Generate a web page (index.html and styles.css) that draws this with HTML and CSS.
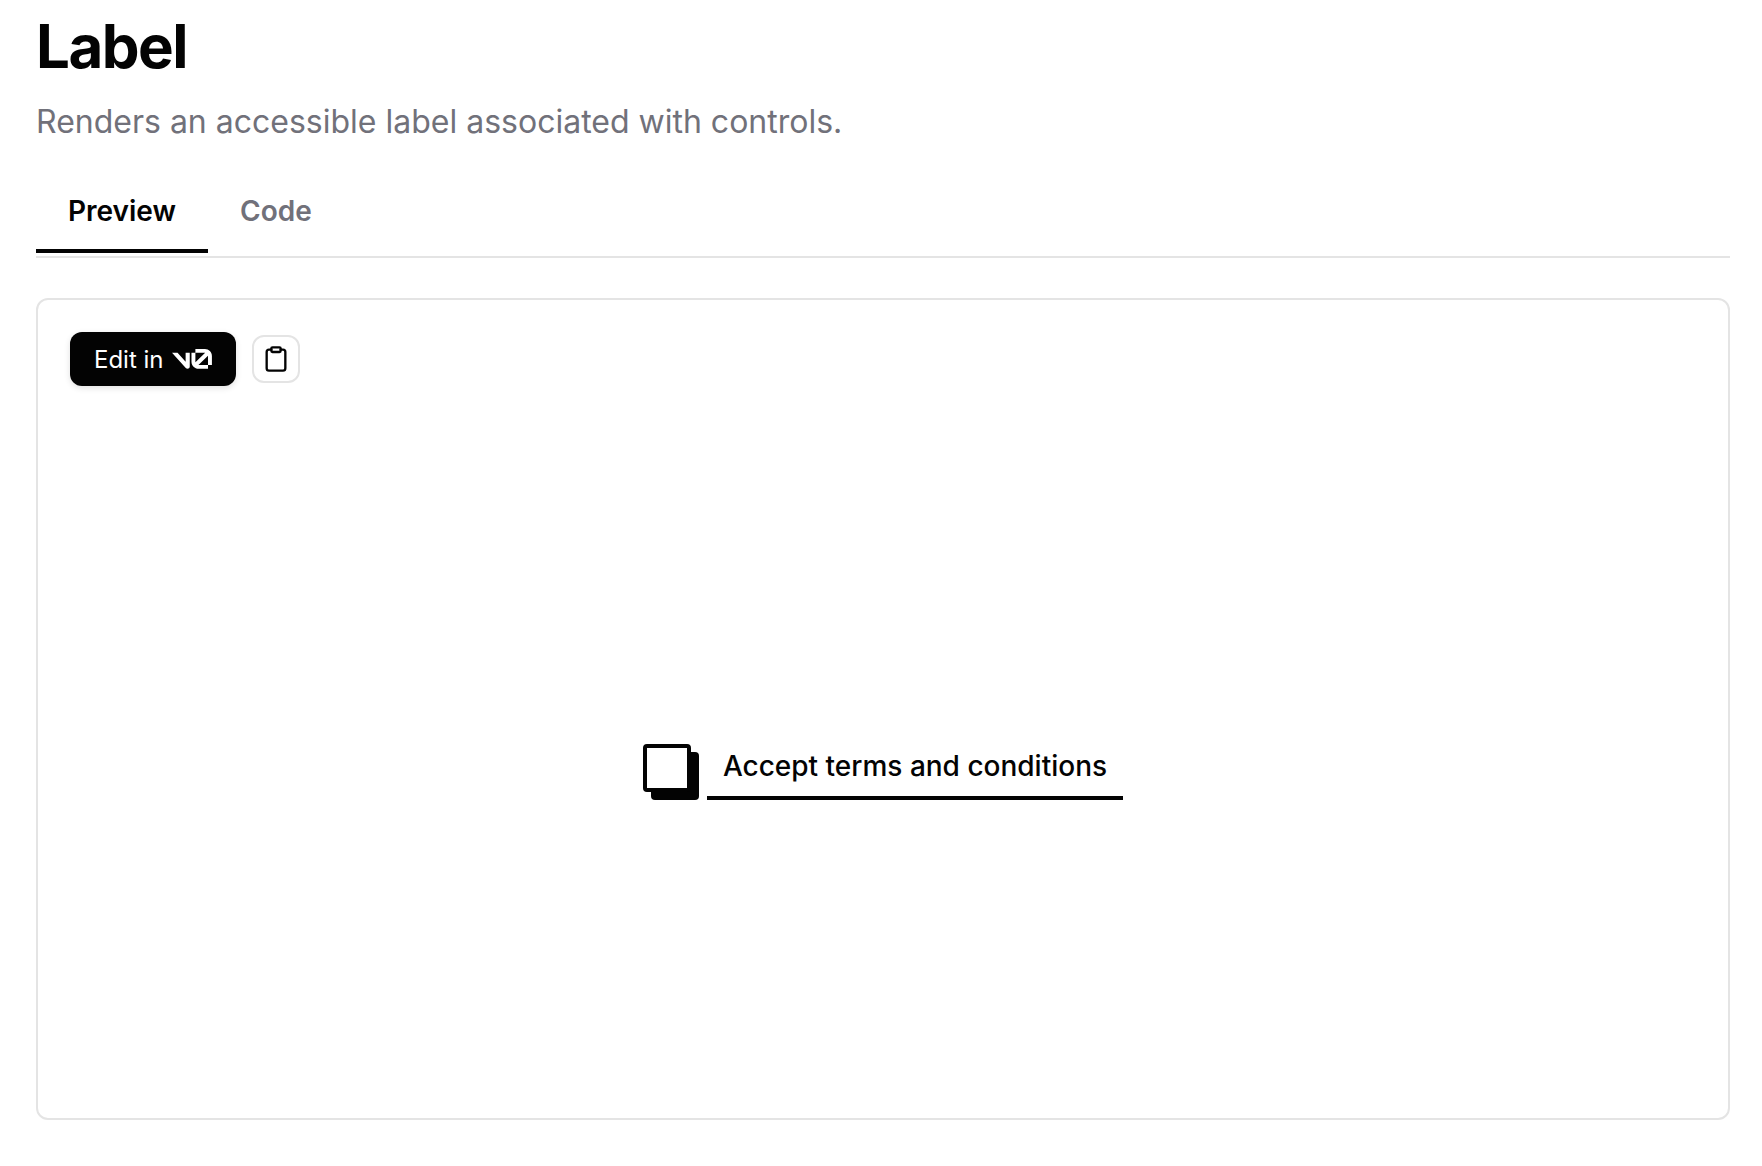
FILE: index.html
```html
<!DOCTYPE html>
<html lang="en">
<head>
  <meta charset="UTF-8" />
  <meta name="viewport" content="width=device-width,initial-scale=1" />
  <title>Label</title>
  <link rel="stylesheet" href="styles.css">
</head>
<body>
  <main class="page">
    <h1>Label</h1>
    <p class="lead">Renders an accessible label associated with controls.</p>

    <div class="tabs" role="tablist">
      <button class="tab active" type="button" role="tab" aria-selected="true">Preview</button>
      <button class="tab" type="button" role="tab" aria-selected="false">Code</button>
    </div>

    <section class="panel">
      <div class="toolbar">
        <button class="btn-v0" type="button">
          Edit in
          <svg class="v0-logo" viewBox="0 0 40 20" fill="currentColor" aria-label="v0">
            <path d="M23.3919 0H32.9188C36.7819 0 39.9136 3.13165 39.9136 6.99475V16.0805H36.0006V6.99475C36.0006 6.90167 35.9969 6.80925 35.9898 6.71766L26.4628 16.079C26.4949 16.08 26.5272 16.0805 26.5595 16.0805H36.0006V19.7762H26.5595C22.6964 19.7762 19.4788 16.6139 19.4788 12.7508V3.68923H23.3919V12.7508C23.3919 12.9253 23.4054 13.0977 23.4316 13.2668L33.1682 3.6995C33.0861 3.6927 33.003 3.68923 32.9188 3.68923H23.3919V0Z"/>
            <path d="M13.7688 19.0956L0 3.68759H5.53933L13.6231 12.7337V3.68759H17.7535V17.5746C17.7535 19.6705 15.1654 20.6584 13.7688 19.0956Z"/>
          </svg>
        </button>
        <button class="btn-copy" type="button" aria-label="Copy code">
          <svg viewBox="0 0 24 24" fill="none" stroke="currentColor" stroke-width="2" stroke-linecap="round" stroke-linejoin="round">
            <rect x="8" y="2" width="8" height="4" rx="1"/>
            <path d="M16 4h2a2 2 0 0 1 2 2v14a2 2 0 0 1-2 2H6a2 2 0 0 1-2-2V6a2 2 0 0 1 2-2h2"/>
          </svg>
        </button>
      </div>
      <div class="stage">
        <input class="checkbox" type="checkbox" id="terms">
        <label class="label" for="terms">Accept terms and conditions</label>
      </div>
    </section>
  </main>
</body>
</html>
```
FILE: styles.css
```css
* { box-sizing: border-box; }
body { margin: 0; background: #fff; color: #030303; font-family: Inter, "Liberation Sans", sans-serif; }
button { font-family: inherit; cursor: pointer; }

.page { padding: 10px 32px 44px 36px; }
h1 { margin: 0; font-size: 60px; line-height: 72px; font-weight: 700; letter-spacing: -0.025em; }
.lead { margin: 18px 0 0; font-size: 32px; line-height: 44px; color: #71717a; }

/* tabs */
.tabs { display: flex; margin-top: 28px; padding-bottom: 3px; border-bottom: 2px solid #e4e4e4; }
.tab { padding: 20px 32px 19px; border: none; border-bottom: 4px solid transparent; background: none; color: #71717a; font-size: 28px; line-height: 38px; font-weight: 600; }
.tab.active { color: #030303; border-bottom-color: #030303; }

/* preview */
.panel { margin-top: 40px; border: 2px solid #e4e4e4; border-radius: 12px; }
.toolbar { display: flex; align-items: center; gap: 16px; padding: 32px 32px 0; }
.btn-v0 { display: flex; align-items: center; gap: 8px; height: 54px; padding: 0 24px; border: none; border-radius: 12px; background: #030303; color: #fff; font-size: 24px; box-shadow: 0 2px 6px rgba(0, 0, 0, 0.12); }
.v0-logo { width: 40px; height: 20px; }
.btn-copy { display: grid; place-items: center; width: 48px; height: 48px; padding: 0; border: 2px solid #e4e4e4; border-radius: 12px; background: #fff; color: #030303; }
.btn-copy svg { width: 28px; height: 28px; }
.stage { display: flex; align-items: center; justify-content: center; gap: 16px; min-height: 732px; padding-top: 32px; }

.checkbox { appearance: none; width: 48px; height: 48px; margin: 0; border: 4px solid #030303; border-radius: 4px; background: #fff; box-shadow: 8px 8px 0 #030303; cursor: pointer; }
.checkbox:checked { background: #030303; box-shadow: none; }
.label { padding: 16px; border-bottom: 4px solid #030303; font-size: 28px; line-height: 28px; font-weight: 500; }
```
